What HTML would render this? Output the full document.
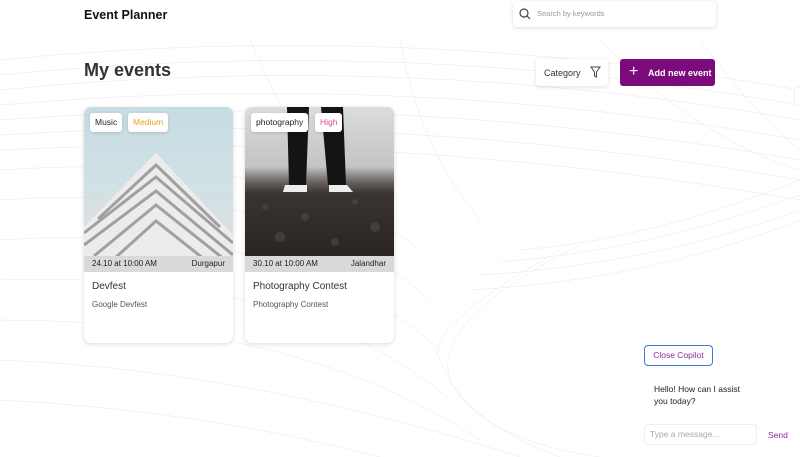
<!DOCTYPE html>
<html><head><style>
*{box-sizing:border-box;margin:0;padding:0}
body{width:800px;height:457px;overflow:hidden;background:#fff;font-family:"Liberation Sans",sans-serif;position:relative;color:#222}
.abs{position:absolute}
.tag{position:absolute;top:6px;height:19px;background:#fff;border-radius:3px;font-size:8.5px;line-height:19px;padding:0 5px;box-shadow:0 1px 3px rgba(0,0,0,.15)}
.card{position:absolute;top:107px;width:149px;height:236px;background:#fff;border-radius:7px;overflow:hidden;box-shadow:0 1px 5px rgba(0,0,0,.15)}
.img{position:absolute;left:0;top:0;width:149px;height:149px}
.bar{position:absolute;left:0;top:149px;width:149px;height:16px;background:rgba(215,215,215,.95);font-size:8px;line-height:16px;padding:0 8px;display:flex;justify-content:space-between;color:#222}
.title{position:absolute;left:8px;top:174px;font-size:10px;color:#333}
.desc{position:absolute;left:8px;top:193px;font-size:8px;color:#555}
</style></head><body>
<svg class="abs" style="left:0;top:38px" width="800" height="419" viewBox="0 38 800 419" fill="none" stroke="#b48ad8" stroke-width=".5" opacity=".25">
<g>
<path d="M0 60 Q400 20 800 90"/><path d="M0 75 Q400 35 800 105"/><path d="M0 90 Q400 50 800 120"/><path d="M0 105 Q400 70 800 140"/><path d="M0 120 Q400 90 800 160"/><path d="M0 135 Q400 110 800 180"/><path d="M0 150 Q400 130 800 200"/>
<path d="M0 170 Q300 150 420 250"/><path d="M0 200 Q300 180 430 300"/><path d="M0 240 Q300 220 440 350"/><path d="M0 280 Q300 270 450 400"/><path d="M0 320 Q300 320 480 440"/><path d="M0 360 Q250 370 520 457"/><path d="M0 400 Q200 410 380 457"/>
<path d="M520 250 Q650 240 800 180"/><path d="M500 262 Q650 250 800 195"/><path d="M480 275 Q650 265 800 210"/><path d="M470 290 Q650 280 800 220"/>
<path d="M560 250 Q420 330 440 360 Q460 420 560 457"/><path d="M580 245 Q430 320 450 380 Q480 440 600 457"/>
<path d="M700 40 Q760 120 800 150"/><path d="M600 40 Q700 140 800 170"/><path d="M400 40 Q420 150 480 220"/><path d="M250 40 Q300 150 350 250"/>
</g></svg>
<div class="abs" style="left:0;top:0;width:800px;height:38px;background:#fff"></div>
<div class="abs" style="left:84px;top:7px;font-size:12.5px;font-weight:bold;color:#111;line-height:16px">Event Planner</div>
<div class="abs" style="left:513px;top:1px;width:203px;height:26px;background:#fff;border-radius:4px;box-shadow:0 1px 4px rgba(0,0,0,.15)">
<svg class="abs" style="left:6px;top:7px" width="12" height="12" viewBox="0 0 12 12" fill="none" stroke="#444" stroke-width="1.2"><circle cx="5" cy="5" r="4"/><path d="M8 8l3 3"/></svg>
<div class="abs" style="left:24px;top:8px;font-size:7.5px;color:#999">Search by keywords</div></div>
<div class="abs" style="left:84px;top:60px;font-size:18px;font-weight:bold;color:#333">My events</div>
<div class="abs" style="left:536px;top:59px;width:72px;height:27px;background:#fff;border-radius:3px;box-shadow:0 1px 4px rgba(0,0,0,.12)">
<div class="abs" style="left:8px;top:9px;font-size:9px;color:#333">Category</div>
<svg class="abs" style="left:54px;top:7px" width="11" height="12" viewBox="0 0 11 12" fill="none" stroke="#444" stroke-width="1"><path d="M1 1h9L6.5 6v5L4.5 10V6z"/></svg></div>
<div class="abs" style="left:620px;top:59px;width:95px;height:27px;background:#7d0a7d;border-radius:3px;color:#fff">
<div class="abs" style="left:9px;top:5px;font-size:16px;line-height:16px;font-weight:300">+</div>
<div class="abs" style="left:28px;top:9px;font-size:9px;font-weight:bold">Add new event</div></div>
<div class="card" style="left:84px">
<div class="img" style="background:linear-gradient(180deg,#c6dce2 0%,#d0e1e5 50%,#dedede 100%)">
<svg width="149" height="149" viewBox="0 0 149 149"><path d="M0 120 L72 46 L149 128 L149 149 L0 149z" fill="#ececec"/><g stroke="#a0a0a0" stroke-width="3" fill="none"><path d="M14 112 L72 58 L136 120"/><path d="M0 126 L72 70 L149 136"/><path d="M0 138 L72 84 L149 148"/><path d="M10 149 L72 98 L140 152"/><path d="M30 152 L72 114 L120 152"/></g></svg></div>
<div class="tag" style="left:6px">Music</div><div class="tag" style="left:44px;color:#e8a317">Medium</div>
<div class="bar"><span>24.10 at 10:00 AM</span><span>Durgapur</span></div>
<div class="title">Devfest</div><div class="desc">Google Devfest</div></div>
<div class="card" style="left:245px">
<div class="img" style="background:linear-gradient(180deg,#dcdcdc 0%,#c4c4c4 40%,#6a6562 50%,#3a3431 58%,#2a2522 100%)">
<svg width="149" height="149" viewBox="0 0 149 149"><g fill="#5a5048" opacity=".5"><circle cx="20" cy="100" r="3"/><circle cx="60" cy="110" r="4"/><circle cx="110" cy="95" r="3"/><circle cx="130" cy="120" r="5"/><circle cx="35" cy="130" r="5"/><circle cx="90" cy="135" r="4"/></g><path d="M42 0h22l-3 78h-17zM76 0h22l3 78h-18z" fill="#141414"/><path d="M40 78h22v7h-24zM84 78h18l6 7h-24z" fill="#eee"/></svg></div>
<div class="tag" style="left:6px">photography</div><div class="tag" style="left:70px;color:#e8479a">High</div>
<div class="bar"><span>30.10 at 10:00 AM</span><span>Jalandhar</span></div>
<div class="title">Photography Contest</div><div class="desc">Photography Contest</div></div>
<div class="abs" style="left:644px;top:345px;width:69px;height:21px;border:1.5px solid #3a7bd5;border-radius:4px;font-size:8.5px;color:#8e2a9e;text-align:center;line-height:18px;background:#fff">Close Copilot</div>
<div class="abs" style="left:654px;top:383px;font-size:8.5px;line-height:12px;color:#222">Hello! How can I assist<br>you today?</div>
<div class="abs" style="left:644px;top:424px;width:113px;height:21px;border:1px solid #eee;border-radius:4px;font-size:8.5px;color:#aaa;line-height:19px;padding-left:5px;background:#fff">Type a message...</div>
<div class="abs" style="left:768px;top:430px;font-size:8.5px;color:#8e2a9e">Send</div>
<div class="abs" style="left:794px;top:86px;width:10px;height:20px;border:1px solid #eee;border-radius:3px;background:#fff"></div>
</body></html>
